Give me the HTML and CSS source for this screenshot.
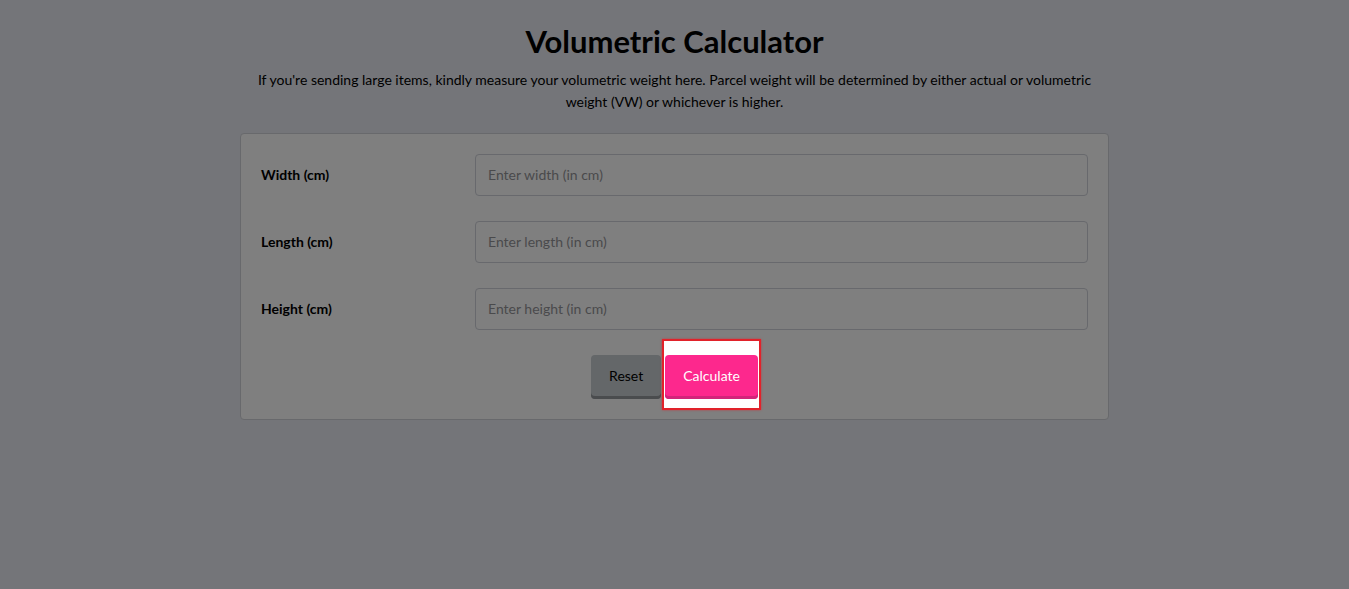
FILE: index.html
```html
<!DOCTYPE html>
<html lang="en">
<head>
<meta charset="utf-8">
<title>Volumetric Calculator</title>
<link rel="stylesheet" href="styles.css">
</head>
<body>
<main class="page">
  <h1 class="title">Volumetric Calculator</h1>
  <p class="intro">If you're sending large items, kindly measure your volumetric weight here. Parcel weight will be determined by either actual or volumetric weight (VW) or whichever is higher.</p>
  <form class="card">
    <div class="row">
      <label class="label" for="w">Width (cm)</label>
      <input class="field" id="w" type="text" placeholder="Enter width (in cm)">
    </div>
    <div class="row">
      <label class="label" for="l">Length (cm)</label>
      <input class="field" id="l" type="text" placeholder="Enter length (in cm)">
    </div>
    <div class="row">
      <label class="label" for="h">Height (cm)</label>
      <input class="field" id="h" type="text" placeholder="Enter height (in cm)">
    </div>
    <div class="actions">
      <button type="reset" class="btn btn-reset">Reset</button>
      <span class="highlight"><button type="button" class="btn btn-calc">Calculate</button></span>
    </div>
  </form>
</main>
</body>
</html>
```
FILE: styles.css
```css
html, body {
  margin: 0;
  padding: 0;
}
body {
  background: #747579;
  font-family: Lato, "Open Sans", Arial, sans-serif;
  color: #000;
  min-height: 589px;
}
.page {
  width: 869px;
  margin: 0 auto;
  padding-top: 22px;
}
.title {
  margin: 0;
  text-align: center;
  font-size: 31px;
  font-weight: 700;
  line-height: 38px;
  color: #000;
}
.intro {
  margin: 9px auto 0;
  width: 846px;
  text-align: center;
  font-size: 14px;
  line-height: 22px;
  color: #000;
}
.card {
  margin-top: 20px;
  background: #7f7f7f;
  border: 1px solid #68696c;
  border-radius: 4px;
  padding: 20px;
  display: flex;
  flex-direction: column;
  gap: 25px;
}
.row {
  display: grid;
  grid-template-columns: 214px 1fr;
  align-items: center;
}
.label {
  font-size: 14px;
  font-weight: 700;
  color: #000;
  line-height: 20px;
  margin-top: -1px;
}
.field {
  box-sizing: border-box;
  height: 42px;
  width: 100%;
  margin: 0;
  padding: 0 12px 1px;
  font-family: inherit;
  font-size: 14px;
  background: #7f7f7f;
  border: 1px solid #68696d;
  border-radius: 4px;
  color: #000;
  outline: none;
}
.field::placeholder {
  color: #4a4a4c;
}
.actions {
  display: flex;
  justify-content: center;
  gap: 4px;
}
.btn {
  height: 44px;
  margin: 0;
  padding: 0 18px 3px;
  border: none;
  border-radius: 4px;
  font-family: inherit;
  font-size: 14px;
  cursor: pointer;
}
.btn-reset {
  background: #646769;
  color: #000;
  box-shadow: inset 0 -3px 0 #4a4c4e;
}
.btn-calc {
  position: relative;
  background: #fd288d;
  color: #fff;
  box-shadow: inset 0 -3px 0 #d2257a;
}
.highlight {
  position: relative;
  display: inline-flex;
  isolation: isolate;
}
.highlight::before {
  content: "";
  position: absolute;
  top: -16px;
  left: -3px;
  right: -3px;
  bottom: -11px;
  background: #fff;
  border: 2px solid #e1222a;
  box-shadow: 0 0 2px rgba(225, 34, 42, 0.7);
  box-sizing: border-box;
  z-index: -1;
}
```
